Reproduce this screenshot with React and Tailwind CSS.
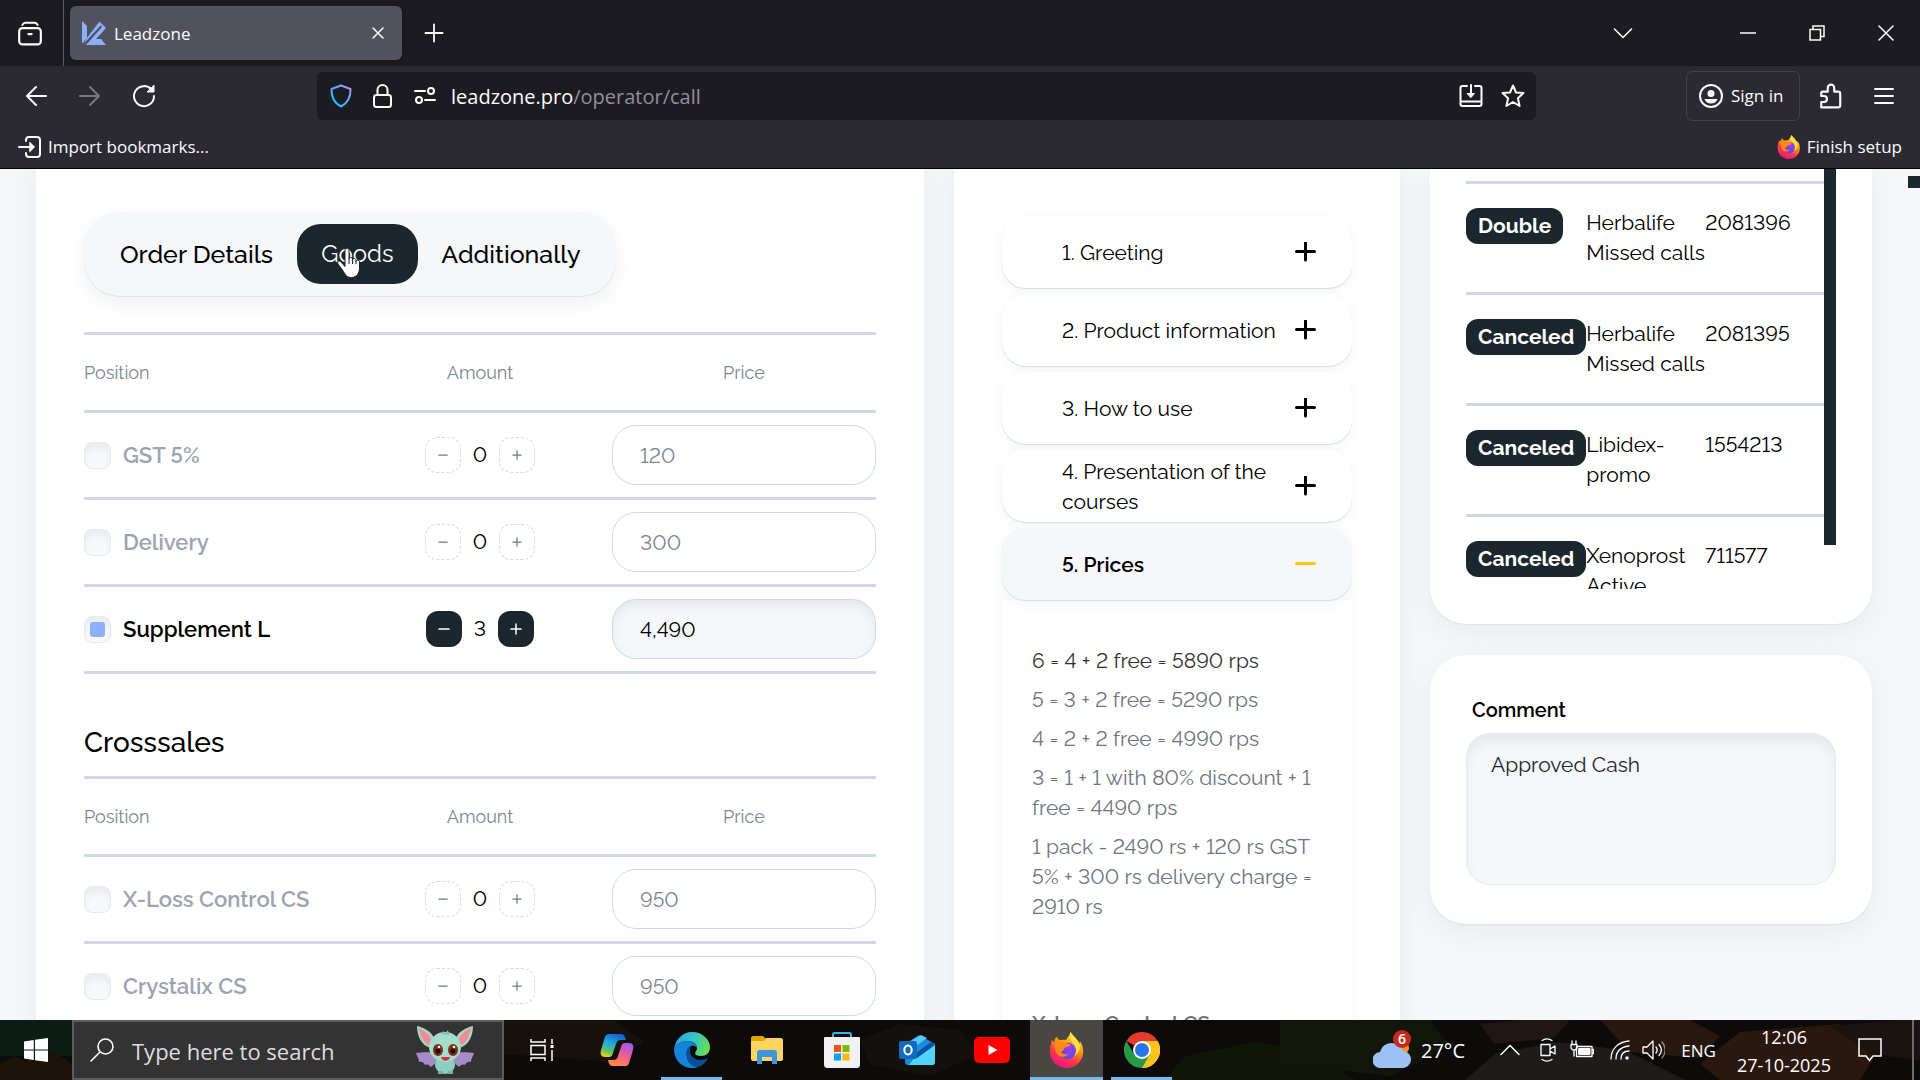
import React, { useState } from 'react';

const goods = [
    { id: 'gst', name: 'GST 5%', amount: 0, price: '120' },
    { id: 'delivery', name: 'Delivery', amount: 0, price: '300' },
    { id: 'supplement', name: 'Supplement L', amount: 3, price: '4,490' },
];

const crosssales = [
    { id: 'xloss', name: 'X-Loss Control CS', amount: 0, price: '950' },
    { id: 'crystalix', name: 'Crystalix CS', amount: 0, price: '950' },
];

const scriptSteps = [
    '1. Greeting',
    '2. Product information',
    '3. How to use',
    '4. Presentation of the courses',
    '5. Prices',
];

const prices = [
    '5 = 3 + 2 free = 5290 rps',
    '4 = 2 + 2 free = 4990 rps',
    '3 = 1 + 1 with 80% discount + 1 free = 4490 rps',
    '1 pack - 2490 rs + 120 rs GST 5% + 300 rs delivery charge = 2910 rs',
];

const calls = [
    { status: 'Double', product: 'Herbalife Missed calls', id: '2081396' },
    { status: 'Canceled', product: 'Herbalife Missed calls', id: '2081395' },
    { status: 'Canceled', product: 'Libidex-promo', id: '1554213' },
    { status: 'Canceled', product: 'Xenoprost Active', id: '711577' },
];

function Icon({ size = 24, box = 24, children, className = '' }) {
    return (
        <svg
            width={size}
            height={size}
            viewBox={`0 0 ${box} ${box}`}
            fill="none"
            stroke="currentColor"
            strokeWidth="2"
            strokeLinecap="round"
            strokeLinejoin="round"
            className={`shrink-0 ${className}`}
            aria-hidden="true"
        >
            {children}
        </svg>
    );
}

function FirefoxLogo({ size, id }) {
    return (
        <svg width={size} height={size} viewBox="0 0 40 40" className="shrink-0" aria-hidden="true">
            <defs>
                <linearGradient id={`${id}-flame`} x1="0.8" y1="0" x2="0.3" y2="1">
                    <stop offset="0" stopColor="#fff44f" />
                    <stop offset="0.4" stopColor="#ff980e" />
                    <stop offset="0.7" stopColor="#ff3647" />
                    <stop offset="1" stopColor="#e31587" />
                </linearGradient>
                <radialGradient id={`${id}-globe`} cx="0.6" cy="0.3" r="0.8">
                    <stop offset="0" stopColor="#a238ff" />
                    <stop offset="1" stopColor="#4a4de0" />
                </radialGradient>
            </defs>
            <path
                d="M24 0c-1 4-4 6-5 9-3-1-6 0-7 0-3-1-3-3-3-4-3 3-3 4-3 6L3 9c0 3-1 5-1 6C1 18 1 20 1 23c1 10 9 17 19 17s18-8 18-18c0-6-2-10-4-12v4c-1-4-3-5-5-8-3-3-4-4-5-6z"
                fill={`url(#${id}-flame)`}
            />
            <circle cx="21" cy="21" r="9" fill={`url(#${id}-globe)`} />
            <path d="M6 12c4-2 8-2 12 0 2 1 5 1 6 2-1 3-5 2-7 4-1 2-1 3-4 4 2 3 6 4 9 2-4 6-13 4-15-4-1-3-1-5-1-8z" fill="#ff8a16" />
            <path d="M24 0c-2 6-1 8 2 11 4 4 6 9 2 16 5-3 7-8 6-13-1-4-3-5-5-8-3-3-4-4-5-6z" fill="#ffe141" />
        </svg>
    );
}

function BrowserChrome() {
    return (
        <header className="shrink-0 font-['Segoe_UI','Open_Sans',sans-serif] text-[#fbfbfe] border-b border-black">
            <div className="flex h-[66px] items-center bg-[#1c1b22]">
                <button aria-label="Recent browsing" className="flex h-full w-16 items-center justify-center border-r border-[#5b5b66] pr-1">
                    <Icon size={26}>
                        <path d="M5 4.500C6 2.500 6.500 2.500 7.500 2.500h9c1 0 1.500 0 2.500 2" />
                        <rect x="2" y="7.500" width="20" height="15" rx="3" />
                        <path d="M10.500 13h3" />
                    </Icon>
                </button>
                <div className="ml-1.5 flex h-[54px] w-[332px] items-center rounded-md bg-[#52525e] pr-4 pl-3 shadow-md">
                    <svg width="24" height="24" viewBox="0 0 24 24" fill="#8ab0ff" aria-hidden="true">
                        <path d="M0 0 5 5v12L0 22.500z" />
                        <path d="M5 17 17 1l2.500 2.500L1 23.500z" />
                        <path d="M17 0l7 7L9.500 23 4 24l16-18z" />
                        <path d="M4 24l7-6h8l5 6z" />
                    </svg>
                    <span className="ml-2 flex-1 pt-0.5 text-[17px]">Leadzone</span>
                    <button aria-label="Close tab">
                        <Icon size={16} box={16}><path d="M3 3l10 10M13 3 3 13" strokeWidth="1.5" /></Icon>
                    </button>
                </div>
                <button aria-label="New tab" className="ml-[22px]">
                    <Icon size={20} box={20}><path d="M10 1.500v17M1.500 10h17" strokeWidth="1.8" /></Icon>
                </button>
                <button aria-label="List all tabs" className="mr-20 ml-auto">
                    <Icon size={20} box={20}><path d="M1.500 6 10 14.500 18.500 6" strokeWidth="1.6" /></Icon>
                </button>
                <button aria-label="Minimize" className="flex h-full w-[69px] items-center justify-center">
                    <Icon size={16} box={16}><path d="M0 8h16" strokeWidth="1.5" /></Icon>
                </button>
                <button aria-label="Restore" className="flex h-full w-[69px] items-center justify-center">
                    <Icon size={16} box={16}>
                        <path d="M1 4.500h10.500V15H1zM4 4V1h11v10.500h-3" strokeWidth="1.5" strokeLinejoin="miter" />
                    </Icon>
                </button>
                <button aria-label="Close" className="flex h-full w-[69px] items-center justify-center">
                    <Icon size={16} box={16}><path d="M1 1l14 14M15 1 1 15" strokeWidth="1.5" /></Icon>
                </button>
            </div>
            <div className="flex h-[60px] items-center bg-[#2b2a33]">
                <div className="flex w-[317px] items-center gap-[30px] pl-6">
                    <button aria-label="Back">
                        <Icon><path d="M22 12H3M12 3l-9 9 9 9" /></Icon>
                    </button>
                    <button aria-label="Forward" className="text-[#78777e]">
                        <Icon><path d="M2 12h19M12 3l9 9-9 9" /></Icon>
                    </button>
                    <button aria-label="Reload">
                        <Icon>
                            <path d="M19.500 5.500A10 10 0 1 0 22 12" />
                            <path d="M22 1.500V8h-6.500z" fill="currentColor" strokeWidth="1" />
                        </Icon>
                    </button>
                </div>
                <div className="flex h-12 flex-1 items-center rounded-md bg-[#1c1b22] pr-[11px] pl-3">
                    <svg width="24" height="24" viewBox="0 0 24 24" fill="none" aria-hidden="true">
                        <defs>
                            <linearGradient id="shield" x1="1" y1="0" x2="0" y2="1">
                                <stop offset="0" stopColor="#b390ff" />
                                <stop offset="0.6" stopColor="#3cb4ff" />
                                <stop offset="1" stopColor="#00ddff" />
                            </linearGradient>
                        </defs>
                        <path d="M12 1.500 21.500 5c.3 8-2.500 14-9.500 17.500C5 19 2.200 13 2.500 5z" stroke="url(#shield)" strokeWidth="2" strokeLinejoin="round" />
                    </svg>
                    <Icon className="ml-[18px]">
                        <rect x="3" y="11" width="17" height="12" rx="2.500" />
                        <path d="M6.500 11V6a5 5 0 0 1 10 0v5" />
                    </Icon>
                    <Icon className="ml-[18px]">
                        <path d="M2 7h10M12 16h10" />
                        <circle cx="18" cy="7" r="3" />
                        <circle cx="6" cy="16" r="3" />
                    </Icon>
                    <div className="ml-3.5 flex-1 pt-0.5 text-xl">
                        leadzone.pro<span className="text-[#8f8f9d]">/operator/call</span>
                    </div>
                    <button aria-label="Install">
                        <Icon>
                            <path d="M8 2H3.500C2 2 1.500 2.500 1.500 4v16c0 1.500.5 2 2 2h17c1.500 0 2-.5 2-2V4c0-1.500-.5-2-2-2H16M1.500 17.500h21" />
                            <path d="M12 1v11" />
                            <path d="M8.500 9.500h7L12 13.500z" fill="currentColor" strokeWidth="1" />
                        </Icon>
                    </button>
                    <button aria-label="Bookmark" className="ml-[18px]">
                        <Icon>
                            <path d="M12 1.500l3 7 7.500.6-5.600 5.100 1.700 7.800L12 18l-6.600 4 1.700-7.800L1.500 9.100 9 8.500z" />
                        </Icon>
                    </button>
                </div>
                <button className="ml-[150px] flex h-[50px] w-[114px] items-center gap-2 rounded-md border border-[#42414d] pl-3 text-[17px]">
                    <Icon>
                        <circle cx="12" cy="12" r="11" />
                        <circle cx="12" cy="9.500" r="3.500" fill="currentColor" stroke="none" />
                        <path d="M5.500 15h13c-1 3-3.500 4.500-6.500 4.500S6.500 18 5.500 15z" fill="currentColor" stroke="none" />
                    </Icon>
                    Sign in
                </button>
                <button aria-label="Extensions" className="ml-[18px]">
                    <Icon size={26}>
                        <path d="M3 22.500h15.500c1.500 0 2-.5 2-2V10c0-1.500-.5-2-2-2H15V4.500a3 3 0 0 0-6 0V8H4.500C3.500 8 3 8.500 3 9.500V12h2.500a2.700 2.700 0 0 1 0 5.500H3z" />
                    </Icon>
                </button>
                <button aria-label="Menu" className="mr-[26px] ml-[30px]">
                    <Icon size={20} box={20}><path d="M1 3h18M1 10h18M1 17h18" /></Icon>
                </button>
            </div>
            <div className="flex h-[42px] items-center justify-between bg-[#2b2a33] px-[18px] text-[17px]">
                <button className="flex items-center gap-1.5">
                    <Icon>
                        <path d="M8 6V5c0-2 .5-3 3-3h8c2 0 3 .5 3 3v14c0 2-1 3-3 3h-8c-2.500 0-3-1-3-3v-1" />
                        <path d="M1 12h13" />
                        <path d="M12 7.500 16.500 12 12 16.500z" fill="currentColor" strokeWidth="1" />
                    </Icon>
                    Import bookmarks...
                </button>
                <button className="flex items-center gap-1.5">
                    <FirefoxLogo size={24} id="setup" />
                    Finish setup
                </button>
            </div>
        </header>
    );
}

function GoodsRow({ item }) {
    const [amount, setAmount] = useState(item.amount);
    const [price, setPrice] = useState(item.price);
    const active = amount > 0;
    const stepClass = active
        ? 'flex size-9 items-center justify-center rounded-xl bg-[#1b262d] text-white'
        : 'flex size-9 items-center justify-center rounded-xl border border-dashed border-[#cddae5] text-[#6c7a87]';

    return (
        <tr>
            <td className="border-b-[3px] border-[#cddae5] p-0">
                <label
                    className={`flex items-center gap-3 text-[22px] font-semibold ${active ? 'text-black' : 'text-[#9ca3b2]'}`}
                >
                    <input
                        type="checkbox"
                        checked={active}
                        onChange={() => setAmount(active ? 0 : 1)}
                        className="grid size-[27px] shrink-0 appearance-none place-content-center rounded-lg border border-[#e6e9ed] bg-[#f8f9fb] shadow-[inset_0_6px_6px_#eaecef] checked:before:size-[15px] checked:before:rounded-[3px] checked:before:bg-[#8ab0ff] checked:before:content-['']"
                    />
                    {item.name}
                </label>
            </td>
            <td className="border-b-[3px] border-[#cddae5] p-0">
                <div className="flex items-center justify-center">
                    <button aria-label="Less" onClick={() => setAmount(Math.max(0, amount - 1))} className={stepClass}>
                        <Icon size={active ? 12 : 10} box={12}><path d="M1 6h10" strokeWidth="1.5" /></Icon>
                    </button>
                    <span className={active ? 'w-9 text-center text-black' : 'w-[38px] text-center text-black'}>{amount}</span>
                    <button aria-label="More" onClick={() => setAmount(amount + 1)} className={stepClass}>
                        <Icon size={active ? 12 : 10} box={12}><path d="M1 6h10M6 1v10" strokeWidth="1.5" /></Icon>
                    </button>
                </div>
            </td>
            <td className="border-b-[3px] border-[#cddae5] p-0 py-3">
                <input
                    type="text"
                    aria-label={`${item.name} price`}
                    value={price}
                    onChange={(e) => setPrice(e.target.value)}
                    className={`block h-[60px] w-full rounded-3xl border border-[#cddae5] px-[27px] ${active
                        ? 'bg-[#f5f7f9] text-black shadow-[inset_0_6px_8px_#e6e8eb]'
                        : 'bg-white text-[#7b8794]'
                        }`}
                />
            </td>
        </tr>
    );
}

function GoodsTable({ items }) {
    return (
        <table className="w-full table-fixed border-separate border-spacing-0">
            <thead>
                <tr className="h-[81px] text-lg text-[#7b8794]">
                    <th className="border-y-[3px] border-[#cddae5] p-0 text-left font-normal">Position</th>
                    <th className="border-y-[3px] border-[#cddae5] p-0 font-normal">Amount</th>
                    <th className="border-y-[3px] border-[#cddae5] p-0 font-normal">Price</th>
                </tr>
            </thead>
            <tbody>
                {items.map((item) => (
                    <GoodsRow key={item.id} item={item} />
                ))}
            </tbody>
        </table>
    );
}

function HandCursor() {
    return (
        <svg
            width="24"
            height="30"
            viewBox="0 0 24 30"
            className="pointer-events-none absolute top-6 left-10"
            aria-hidden="true"
        >
            <path
                d="M8 2.500c0-3 4-3 4 0V11c0-2 3.500-2 3.500 0v1c0-2 3.500-1.700 3.500.2v1c0-1.700 3.500-1.500 3.500.5V20c0 5-3 9.500-8 9.500-4 0-6-2-8-6L1 16c-1.500-3 1.500-3.800 3-2l4 4.500z"
                fill="#fff"
                stroke="#1b262d"
                strokeWidth="1"
            />
            <path d="M12 11v5M15.500 12v4M19 13v3" stroke="#1b262d" strokeWidth="1" />
        </svg>
    );
}

function OrderCard() {
    return (
        <section className="bg-white px-12 pt-[43px] shadow-[0_0_24px_#e8ecf0]">
            <nav className="inline-flex rounded-[36px] bg-[#f5f7f9] p-3 text-[25px] font-medium text-black shadow-[0_1px_1px_#dfe2e4,0_8px_24px_#f0f1f1]">
                <button className="h-[60px] w-[201px] rounded-3xl">Order Details</button>
                <button className="relative h-[60px] w-[121px] rounded-3xl bg-[#1b262d] text-2xl font-normal text-white">
                    Goods
                    <HandCursor />
                </button>
                <button className="h-[60px] w-[186px] rounded-3xl">Additionally</button>
            </nav>
            <div className="mt-9">
                <GoodsTable items={goods} />
            </div>
            <h2 className="mt-[50px] mb-3.5 text-[28px] leading-[38px] font-medium text-black">Crosssales</h2>
            <GoodsTable items={crosssales} />
        </section>
    );
}

function ScriptCard() {
    const [open, setOpen] = useState(4);

    return (
        <section className="bg-white px-12 pt-[47px] shadow-[0_0_24px_#e8ecf0]">
            <div className="flex flex-col gap-1.5">
                {scriptSteps.map((step, index) => (
                    <button
                        key={step}
                        onClick={() => setOpen(index)}
                        className={`flex h-[72px] items-center justify-between rounded-3xl pr-9 pl-[60px] text-left text-black shadow-[0_1px_1px_#d5dbe3,0_4px_16px_#f3f5f6] ${open === index ? 'bg-[#f5f7f9] font-semibold' : 'bg-white'
                            }`}
                    >
                        <span className="flex-1 pt-0.5">{step}</span>
                        {open === index ? (
                            <Icon size={21} box={21} className="text-[#ffc700]"><path d="M1.500 9.500h18" strokeWidth="3" /></Icon>
                        ) : (
                            <Icon size={21} box={21}><path d="M1.500 9.500h18M10.500 1v17" strokeWidth="3" /></Icon>
                        )}
                    </button>
                ))}
            </div>
            <div className="flex flex-col gap-[9px] bg-white px-[30px] pt-[46px] pb-12 text-[#6d7580] shadow-[0_0_16px_#f3f4f5]">
                <p className="text-[#333]">6 = 4 + 2 free = 5890 rps</p>
                {prices.map((line) => (
                    <p key={line}>{line}</p>
                ))}
                <p>&nbsp;</p>
                <p>&nbsp;</p>
                <p className="font-semibold">X-Loss Control CS</p>
            </div>
        </section>
    );
}

function SideColumn() {
    return (
        <div className="flex flex-col gap-[31px]">
            <section className="rounded-b-[36px] bg-white px-9 pb-[35px] shadow-[0_1px_1px_#dfe2e4,0_8px_24px_#e8ecf0]">
                <div className="flex h-[420px] items-start overflow-hidden pt-3">
                    <table className="min-w-0 flex-1 table-fixed border-separate border-spacing-0 text-black">
                        <tbody>
                            {calls.map((call) => (
                                <tr key={call.id} className="h-[111px]">
                                    <td className="w-1/3 border-t-[3px] border-[#cddae5] p-0 pt-6 align-top">
                                        <span className="inline-flex h-9 items-center rounded-xl bg-[#1b262d] px-3 font-bold text-white">
                                            {call.status}
                                        </span>
                                    </td>
                                    <td className="w-1/3 border-t-[3px] border-[#cddae5] p-0 pt-6 align-top">{call.product}</td>
                                    <td className="w-1/3 border-t-[3px] border-[#cddae5] p-0 pt-6 align-top">{call.id}</td>
                                </tr>
                            ))}
                        </tbody>
                    </table>
                    <div className="-mt-3 h-[376px] w-3 shrink-0 bg-[#1b262d]" />
                </div>
            </section>
            <section className="rounded-[36px] bg-white px-9 pt-10 pb-[39px] shadow-[0_1px_1px_#dfe2e4,0_8px_24px_#e8ecf0]">
                <label htmlFor="comment" className="mb-2 block pl-1.5 text-xl leading-[30px] font-semibold text-black">Comment</label>
                <textarea
                    id="comment"
                    defaultValue="Approved Cash"
                    className="block h-[152px] w-full resize-none rounded-3xl border border-[#e3eaf0] bg-[#f5f7f9] px-6 py-4 text-[#1b262d] shadow-[inset_0_8px_8px_#e6e8eb]"
                />
            </section>
        </div>
    );
}

function TaskButton({ label, state = '', children }) {
    return (
        <button
            aria-label={label}
            className={`relative mx-px flex h-full w-[73px] items-center justify-center ${state === 'focused' ? 'bg-[#4a4743]' : ''}`}
        >
            {children}
            {state === 'focused' && <span className="absolute inset-x-0 bottom-0 h-[3px] bg-[#76b9ed]" />}
            {state === 'running' && <span className="absolute inset-x-1.5 bottom-0 h-[3px] bg-[#76b9ed]" />}
        </button>
    );
}

function RockyBackdrop() {
    return (
        <svg
            viewBox="0 0 1920 60"
            preserveAspectRatio="none"
            className="absolute inset-0 h-full w-full"
            aria-hidden="true"
        >
            <rect width="1920" height="60" fill="#0d0b0a" />
            <rect width="72" height="36" fill="#0d1d15" />
            <path d="M0 60V44l14-8 12 6 12-12 20 4 14 10v16z" fill="#1c130b" />
            <path d="M504 0h110l30 22-30 20-110-8z" fill="#16110c" />
            <path d="M1165 60l20-24 70-14 60 10 40 28z" fill="#10150a" />
            <path d="M1280 0h150l20 26-60 30-110-12z" fill="#12150a" />
            <path d="M1465 60l30-26 60-12 70 8 60 30z" fill="#1d1c1b" />
            <path d="M1480 4l40-4h50l-16 18-60 6z" fill="#211712" />
            <path d="M1600 0h90l30 16-20 22-70-6z" fill="#28180f" />
            <path d="M1700 44l40-32 100-8 40 24-20 32h-140z" fill="#2a180f" />
            <path d="M1830 6l70-6h20v40l-50-6z" fill="#1a130f" />
            <path d="M860 20l40-16 60 6 20 24-50 22-60-12z" fill="#14100d" />
        </svg>
    );
}

function Taskbar() {
    return (
        <footer className="relative h-[60px] shrink-0 bg-[#0c0b0a] font-['Segoe_UI','Open_Sans',sans-serif] text-white">
            <RockyBackdrop />
            <div className="relative flex h-full items-center">
                <button aria-label="Start" className="flex h-full w-[72px] items-center justify-center">
                    <svg width="24" height="24" viewBox="0 0 24 24" fill="#fff" aria-hidden="true">
                        <path d="M0 3.400 9.800 2v9.500H0zM11 1.800 24 0v11.500H11zM0 12.600h9.800V22L0 20.600zM11 12.600h13V24l-13-1.800z" />
                    </svg>
                </button>
                <div className="flex h-full w-[432px] items-center border-2 border-[#5c5c5c] bg-[#333] pr-7 pl-4">
                    <Icon>
                        <circle cx="15.500" cy="8.500" r="7.500" strokeWidth="1.6" />
                        <path d="M10 14 1 23" strokeWidth="1.6" />
                    </Icon>
                    <input
                        type="text"
                        aria-label="Search"
                        placeholder="Type here to search"
                        className="ml-[18px] min-w-0 flex-1 bg-transparent pt-0.5 text-[22px] placeholder:text-[#dedede]"
                    />
                    <svg width="58" height="48" viewBox="0 0 58 48" aria-hidden="true">
                        <path d="M20 28C12 25 6 27 0 27c1 4 3 5 3 9 3-1 5 1 6 3 3-1 4 0 6 2l7-6zM38 28c8-3 14-1 20-1-1 4-3 5-3 9-3-1-5 1-6 3-3-1-4 0-6 2l-7-6z" fill="#a58cc9" />
                        <path d="M20 18C18 6 9 2 1 0c0 9 4 20 14 22zM38 18C40 6 49 2 57 0c0 9-4 20-14 22z" fill="#9fd8c4" />
                        <path d="M17 18C15 9 9 5 3 2c1 8 5 15 11 18zM41 18c2-9 8-13 14-16-1 8-5 15-11 18z" fill="#f58a94" />
                        <ellipse cx="29" cy="39" rx="10" ry="9" fill="#8fcfc0" />
                        <ellipse cx="29" cy="21" rx="16" ry="15" fill="#a5dccb" />
                        <path d="M25 8l2-3 2 2 3-3 1 5z" fill="#7cc4b0" />
                        <ellipse cx="22" cy="24" rx="5" ry="6" fill="#7a2f16" />
                        <ellipse cx="37" cy="24" rx="5" ry="6" fill="#7a2f16" />
                        <circle cx="22" cy="25" r="2.500" fill="#230b06" />
                        <circle cx="37" cy="25" r="2.500" fill="#230b06" />
                        <circle cx="23" cy="21" r="1.300" fill="#fff" />
                        <circle cx="38" cy="21" r="1.300" fill="#fff" />
                        <path d="M25 31h9c-1 5-8 5-9 0z" fill="#d3303a" />
                        <path d="M22 45h5v3h-5zM32 45h5v3h-5z" fill="#6fb3a5" />
                    </svg>
                </div>
                <TaskButton label="Task view">
                    <svg width="24" height="24" viewBox="0 0 24 24" fill="none" stroke="#fff" strokeWidth="1.500" aria-hidden="true">
                        <path d="M1 7.500h14v9H1zM1 1v3h14V1M1 23v-3h14v3M22 1v5M22 12v11" />
                        <path d="M20.500 7h3v3h-3z" fill="#fff" stroke="none" />
                    </svg>
                </TaskButton>
                <TaskButton label="Copilot">
                    <svg width="34" height="36" viewBox="0 0 34 32" aria-hidden="true">
                        <defs>
                            <linearGradient id="copilot-a" x1="0.6" y1="0" x2="0.2" y2="1">
                                <stop offset="0" stopColor="#1b5fd0" />
                                <stop offset="0.4" stopColor="#1aa9e0" />
                                <stop offset="0.75" stopColor="#5ec26a" />
                                <stop offset="1" stopColor="#ffd000" />
                            </linearGradient>
                            <linearGradient id="copilot-b" x1="0.8" y1="0" x2="0.3" y2="1">
                                <stop offset="0" stopColor="#9b5cf0" />
                                <stop offset="0.5" stopColor="#ef5e97" />
                                <stop offset="1" stopColor="#ff8a3c" />
                            </linearGradient>
                        </defs>
                        <path d="M9 0h12c3 0 4 2 5 6h-5c-3 0-4 1-5 4l-3 9c-1 3-2 4-4 4H5c-4 0-5-3-4-7L4 6c1-4 2-6 5-6z" fill="url(#copilot-a)" />
                        <path d="M25 32H13c-3 0-4-2-5-6h5c3 0 4-1 5-4l3-9c1-3 2-4 4-4h4c4 0 5 3 4 7l-3 10c-1 4-2 6-5 6z" fill="url(#copilot-b)" />
                    </svg>
                </TaskButton>
                <TaskButton label="Edge" state="running">
                    <svg width="36" height="36" viewBox="0 0 36 36" aria-hidden="true">
                        <defs>
                            <linearGradient id="edge-top" x1="0" y1="0.3" x2="1" y2="0.6">
                                <stop offset="0" stopColor="#2aa6e0" />
                                <stop offset="0.5" stopColor="#35c4c4" />
                                <stop offset="1" stopColor="#69e04f" />
                            </linearGradient>
                        </defs>
                        <path d="M0 18C1 7 9 0 18 0c11 0 18 8 18 15 0 6-4 9-9 9-4 0-6-1-6-3 0-1 2-2 2-5 0-4-4-7-10-7C6 9 1 13 0 18z" fill="url(#edge-top)" />
                        <path d="M0 18C1 12 6 9 12 9c6 0 11 3 11 7-1-2-4-3-6-2-4 2-5 6-4 11 1 6 6 10 11 10-2 1-4 1-6 1C8 36 0 28 0 18z" fill="#1583d8" />
                        <path d="M13 25c-1-5 0-9 4-11-3 5 0 14 9 14 3 0 6-1 8-2-3 6-7 9-12 9-5-1-8-5-9-10z" fill="#0c4f96" />
                    </svg>
                </TaskButton>
                <TaskButton label="File Explorer">
                    <svg width="32" height="28" viewBox="0 0 32 28" aria-hidden="true">
                        <path d="M0 2c0-1 1-2 2-2h10l3 3v6H0z" fill="#e5a50a" />
                        <path d="M0 5h13l2-3h15c1 0 2 1 2 2v19c0 1-1 2-2 2H2c-1 0-2-1-2-2z" fill="#ffd55f" />
                        <path d="M6 28V17c0-2 1-3 3-3h14c2 0 3 1 3 3v11h-5v-7H11v7z" fill="#3a96dd" />
                    </svg>
                </TaskButton>
                <TaskButton label="Store">
                    <svg width="36" height="36" viewBox="0 0 36 36" aria-hidden="true">
                        <path d="M9 7V2.500C9 1.500 9.500 1 10.500 1h15c1 0 1.500.5 1.500 1.500V7" fill="none" stroke="#2fb4f0" strokeWidth="2" />
                        <path d="M0 6c0-1 1-1 1-1h34s1 0 1 1v26c0 3-1 4-4 4H4c-3 0-4-1-4-4z" fill="#f1f1f1" />
                        <path d="M10 13h7v7h-7z" fill="#f25022" />
                        <path d="M18.500 13h7v7h-7z" fill="#7fba00" />
                        <path d="M10 21.500h7v7h-7z" fill="#00a4ef" />
                        <path d="M18.500 21.500h7v7h-7z" fill="#ffb900" />
                    </svg>
                </TaskButton>
                <TaskButton label="Outlook">
                    <svg width="36" height="30" viewBox="0 0 36 30" aria-hidden="true">
                        <path d="M6 9 20 0l16 9v18c0 2-1 3-3 3H9c-2 0-3-1-3-3z" fill="#1c8ce0" />
                        <path d="M12 6l10-6 6 3-18 13z" fill="#5bc8f5" />
                        <path d="M16 22 36 9v18c0 2-1 3-3 3H10z" fill="#4fd5fa" />
                        <path d="M17 18 32 7l4 3-18 13z" fill="#0a4fa3" />
                        <rect y="6" width="18" height="18" rx="2" fill="#0f6cbd" />
                        <ellipse cx="9" cy="15" rx="3.700" ry="4.500" fill="none" stroke="#fff" strokeWidth="2" />
                    </svg>
                </TaskButton>
                <TaskButton label="YouTube">
                    <svg width="36" height="26" viewBox="0 0 36 26" aria-hidden="true">
                        <rect width="36" height="26" rx="5" fill="#f00" />
                        <path d="M14.500 8v10l9-5z" fill="#fff" />
                    </svg>
                </TaskButton>
                <TaskButton label="Firefox" state="focused">
                    <FirefoxLogo size={36} id="task" />
                </TaskButton>
                <TaskButton label="Chrome" state="running">
                    <svg width="36" height="36" viewBox="0 0 36 36" aria-hidden="true">
                        <path d="M18 18 2.400 9A18 18 0 0 1 33.600 9z" fill="#e33b2e" />
                        <path d="M18 18l15.600-9A18 18 0 0 1 18 36z" fill="#fcc31e" />
                        <path d="M18 9h15.600A18 18 0 0 1 18 36l7.800-13.500z" fill="#fcc31e" />
                        <path d="M2.400 9A18 18 0 0 0 18 36l7.800-13.500H10.200z" fill="#259b48" />
                        <circle cx="18" cy="18" r="9" fill="#fff" />
                        <circle cx="18" cy="18" r="7" fill="#2a74e8" />
                    </svg>
                </TaskButton>
                <div className="ml-auto flex h-full items-center">
                    <button className="flex items-center gap-2.5 text-xl">
                        <span className="relative">
                            <svg width="38" height="36" viewBox="0 0 38 36" aria-hidden="true">
                                <circle cx="30" cy="16" r="6" fill="#f7931e" />
                                <path d="M8 36a8 8 0 0 1-1-16 12 12 0 0 1 23-1 8.500 8.500 0 0 1-1 17z" fill="#9dc0f5" />
                            </svg>
                            <span className="absolute -top-0.5 right-0 flex size-[18px] items-center justify-center rounded-full bg-[#c42b1c] text-sm font-semibold">6</span>
                        </span>
                        <span className="pt-0.5">27°C</span>
                    </button>
                    <button aria-label="Show hidden icons" className="ml-[35px]">
                        <Icon size={20} box={20}><path d="M1 14.500 10 5.500l9 9" strokeWidth="1.5" /></Icon>
                    </button>
                    <Icon className="ml-4">
                        <path d="M5 6.500h9v11H5zM14 11l5-3v8l-5-3M6 2.500c3-2 7-2 10 0M6 21.500c3 2 7 2 10 0" strokeWidth="1.3" />
                    </Icon>
                    <Icon className="ml-2.5">
                        <path d="M6.500 8.500H22v10H6.500zM22 11.500h1.500v4H22" strokeWidth="1.3" />
                        <path d="M9 10.500h11v6H9z" fill="currentColor" strokeWidth="1" />
                        <path d="M2 3v3M6 3v3M1 6.500h6V9c0 4-6 4-6 0zM4 12v6" strokeWidth="1.300" />
                    </Icon>
                    <Icon className="ml-[15px]">
                        <path d="M2 21C2 11 9 4 20 3M7 21c0-8 5-12 13-13M12 21c0-5 3-8 8-8" strokeWidth="1.300" />
                        <circle cx="18" cy="20" r="1.800" fill="currentColor" stroke="none" />
                    </Icon>
                    <Icon className="ml-2">
                        <path d="M2 9h4l6-6v18l-6-6H2zM15 9c1.500 2 1.500 4 0 6M18 6.500c3 3.500 3 7.500 0 11" strokeWidth="1.300" />
                        <path d="M21 4c4 5 4 11 0 16" strokeWidth="1.300" opacity="0.5" />
                    </Icon>
                    <span className="w-[67px] pt-0.5 text-center text-[17px]">ENG</span>
                    <div className="w-[104px] pt-0.5 text-center text-lg leading-7">
                        <div>12:06</div>
                        <div>27-10-2025</div>
                    </div>
                    <button aria-label="Notifications" className="ml-[22px]">
                        <Icon>
                            <path d="M1 1h22v17h-8l-3.500 4.500L8 18H1z" strokeWidth="1.500" strokeLinejoin="miter" />
                        </Icon>
                    </button>
                    <span className="mr-1.5 ml-[30px] h-full w-0.5 bg-[#6b6b6b]" />
                </div>
            </div>
        </footer>
    );
}

function App() {
    return (
        <div className="flex h-screen flex-col overflow-hidden">
            <BrowserChrome />
            <div className="flex min-h-0 flex-1 overflow-hidden bg-[#f5f7f9] font-['Raleway','Lato',sans-serif] text-[21px] leading-[30px] lining-nums">
                <main className="grid flex-1 grid-cols-[444fr_223fr_221fr] gap-x-[30px] pr-9 pl-9">
                    <OrderCard />
                    <ScriptCard />
                    <SideColumn />
                </main>
                <div className="w-3 shrink-0 pt-[7px]">
                    <div className="h-3 bg-[#1b262d]" />
                </div>
            </div>
            <Taskbar />
        </div>
    );
}

export default App
